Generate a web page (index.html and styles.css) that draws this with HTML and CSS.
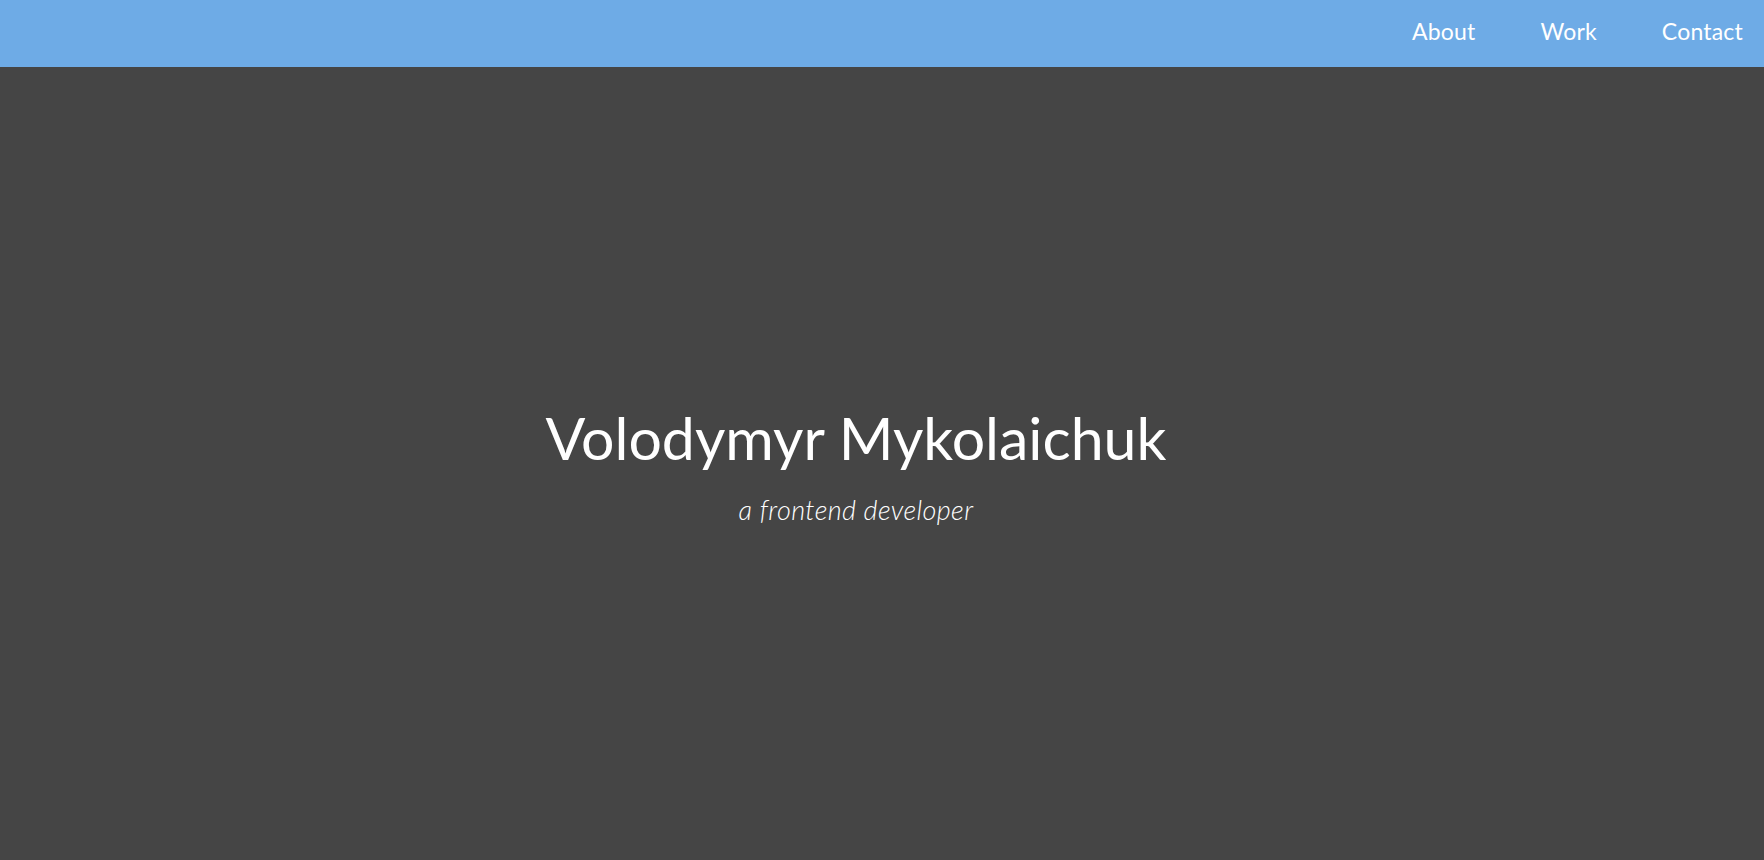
FILE: index.html
```html
<!DOCTYPE html>
<html lang="en">
<head>
<meta charset="utf-8">
<title>Volodymyr Mykolaichuk</title>
<link rel="stylesheet" href="styles.css">
</head>
<body>
<header class="topbar">
  <nav class="nav">
    <a class="nav-link" href="#about">About</a>
    <a class="nav-link" href="#work">Work</a>
    <a class="nav-link" href="#contact">Contact</a>
  </nav>
</header>
<main class="hero">
  <h1 class="hero-title">Volodymyr Mykolaichuk</h1>
  <p class="hero-sub">a frontend developer</p>
</main>
</body>
</html>
```

FILE: styles.css
```css
html, body {
  margin: 0;
  padding: 0;
  height: 100%;
}
body {
  font-family: Lato, "Open Sans", sans-serif;
  background: #454545;
  color: #ffffff;
  display: flex;
  flex-direction: column;
  overflow: hidden;
}
.topbar {
  height: 67px;
  background: #6eabe6;
  display: flex;
  align-items: center;
  justify-content: flex-end;
  flex-shrink: 0;
}
.nav {
  display: flex;
  gap: 65px;
  padding-right: 21px;
  padding-bottom: 6px;
}
.nav-link {
  color: #ffffff;
  text-decoration: none;
  font-size: 23px;
  font-weight: 400;
  letter-spacing: 0.2px;
}
.hero {
  flex: 1;
  display: flex;
  flex-direction: column;
  align-items: center;
  justify-content: center;
  padding-right: 52px;
  padding-top: 2px;
}
.hero-title {
  margin: 0;
  font-size: 59px;
  font-weight: 400;
  line-height: 1.2;
}
.hero-sub {
  margin: 19px 0 0;
  font-size: 27px;
  font-style: italic;
  font-weight: 300;
  letter-spacing: 0.4px;
}
```
